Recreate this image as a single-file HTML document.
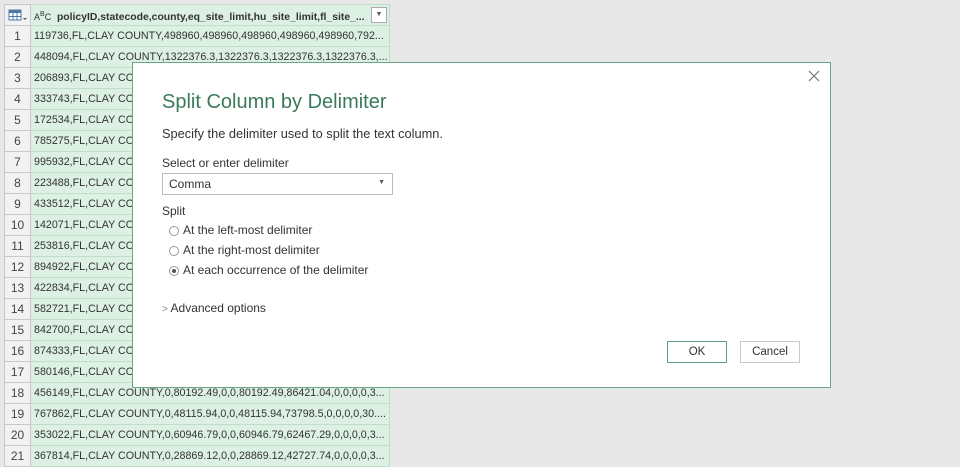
<!DOCTYPE html>
<html><head><style>
*{box-sizing:border-box;margin:0;padding:0}
body{width:960px;height:463px;background:#e8e8e8;font-family:"Liberation Sans",sans-serif;position:relative;overflow:hidden;color:#333}
.grid{position:absolute;left:4px;top:4px}
.row{position:absolute;left:0;height:21px;width:386px}
.num{position:absolute;left:0;width:27px;height:21px;background:#f2f2f2;border:1px solid #c8c8c8;border-top:none;text-align:center;font-size:12px;line-height:21px;color:#444}
.cell{position:absolute;left:27px;width:359px;height:21px;background:#dcf1e3;border-bottom:1px solid #c2dccb;border-right:1px solid #c2dccb;font-size:10.7px;line-height:21px;padding-left:3px;white-space:nowrap;overflow:hidden;color:#333}
.hdr .num{background:#f2f2f2;border-top:1px solid #c8c8c8}
.hdr .cell{background:#dcf1e3;border-top:1px solid #c2dccb;font-weight:bold;font-size:10.4px;line-height:20px}
.dlg{position:absolute;left:132px;top:62px;width:699px;height:326px;background:#fff;border:1px solid #6aa584}
.t{position:absolute;white-space:nowrap}
.btn{position:absolute;top:278px;width:60px;height:22px;border:1px solid #c8c8c8;font-size:11.5px;text-align:center;line-height:20px;color:#333}
.radio{position:absolute;left:36px;width:10px;height:10px;border:1px solid #999;border-radius:50%}
</style></head><body>
<div class="grid">
<div class="row hdr" style="top:0">
<div class="num" style="height:22px"><svg width="20" height="14" viewBox="0 0 20 14" style="margin-top:4px"><rect x="1" y="1" width="12" height="10" fill="#fff" stroke="#4b78a8"/><rect x="1" y="1" width="12" height="3" fill="#4b78a8"/><line x1="5" y1="4" x2="5" y2="11" stroke="#4b78a8"/><line x1="9" y1="4" x2="9" y2="11" stroke="#4b78a8"/><line x1="1" y1="7.5" x2="13" y2="7.5" stroke="#4b78a8"/><path d="M15 9l2 2 2-2z" fill="#555"/></svg></div>
<div class="cell" style="height:22px"><span style="font-size:9px;font-weight:normal">A<sup style="font-size:7px">B</sup>C</span>&nbsp; policyID,statecode,county,eq_site_limit,hu_site_limit,fl_site_...
<span style="position:absolute;right:2px;top:2px;width:16px;height:16px;background:#fff;border:1px solid #aaa;font-size:7px;line-height:14px;text-align:center;color:#555">▼</span></div>
</div>
</div>
<div class="grid" id="g"></div>
<script>
var d=["119736,FL,CLAY COUNTY,498960,498960,498960,498960,498960,792...","448094,FL,CLAY COUNTY,1322376.3,1322376.3,1322376.3,1322376.3,...","206893,FL,CLAY COUNTY","333743,FL,CLAY COUNTY","172534,FL,CLAY COUNTY","785275,FL,CLAY COUNTY","995932,FL,CLAY COUNTY","223488,FL,CLAY COUNTY","433512,FL,CLAY COUNTY","142071,FL,CLAY COUNTY","253816,FL,CLAY COUNTY","894922,FL,CLAY COUNTY","422834,FL,CLAY COUNTY","582721,FL,CLAY COUNTY","842700,FL,CLAY COUNTY","874333,FL,CLAY COUNTY","580146,FL,CLAY COUNTY","456149,FL,CLAY COUNTY,0,80192.49,0,0,80192.49,86421.04,0,0,0,0,3...","767862,FL,CLAY COUNTY,0,48115.94,0,0,48115.94,73798.5,0,0,0,0,30....","353022,FL,CLAY COUNTY,0,60946.79,0,0,60946.79,62467.29,0,0,0,0,3...","367814,FL,CLAY COUNTY,0,28869.12,0,0,28869.12,42727.74,0,0,0,0,3..."];
var h="";for(var i=0;i<21;i++){h+='<div class="row" style="top:'+(22+i*21)+'px"><div class="num">'+(i+1)+'</div><div class="cell">'+d[i]+'</div></div>';}
document.getElementById("g").innerHTML=h;
</script>
<div class="dlg">
<svg style="position:absolute;right:10px;top:7px" width="12" height="12" viewBox="0 0 12 12"><path d="M1 1L11 11M11 1L1 11" stroke="#777" stroke-width="1.2"/></svg>
<div class="t" style="left:29px;top:28px;font-size:20px;color:#3a7a5a">Split Column by Delimiter</div>
<div class="t" style="left:29px;top:63px;font-size:12.8px;color:#333">Specify the delimiter used to split the text column.</div>
<div class="t" style="left:29px;top:93px;font-size:12px">Select or enter delimiter</div>
<div style="position:absolute;left:29px;top:110px;width:231px;height:22px;border:1px solid #bbb"><span class="t" style="left:6px;top:3px;font-size:12px">Comma</span><span class="t" style="right:7px;top:5px;font-size:7px;color:#555">▼</span></div>
<div class="t" style="left:29px;top:141px;font-size:12px">Split</div>
<div class="radio" style="top:163px"></div><div class="t" style="left:50px;top:160px;font-size:12px">At the left-most delimiter</div>
<div class="radio" style="top:183px"></div><div class="t" style="left:50px;top:180px;font-size:12px">At the right-most delimiter</div>
<div class="radio" style="top:203px"><div style="width:4px;height:4px;background:#555;border-radius:50%;margin:2px"></div></div><div class="t" style="left:50px;top:200px;font-size:12px">At each occurrence of the delimiter</div>
<div class="t" style="left:29px;top:238px;font-size:12px;color:#333"><span style="color:#888;font-size:10px">&gt;</span> Advanced options</div>
<div class="btn" style="left:534px;border:1px solid #5c9e79">OK</div>
<div class="btn" style="left:607px">Cancel</div>
</div>
</body></html>
